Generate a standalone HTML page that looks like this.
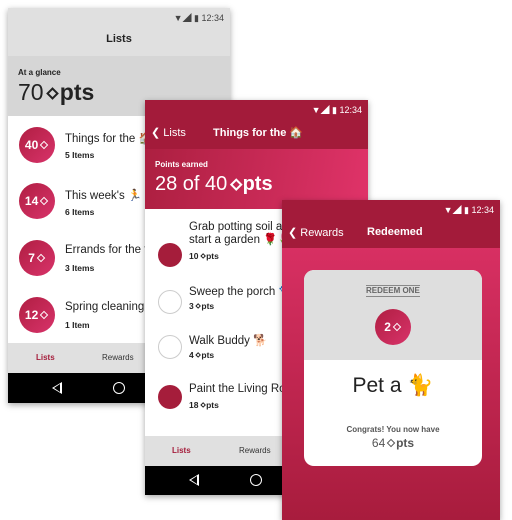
<!DOCTYPE html>
<html><head><meta charset="utf-8"><style>
*{margin:0;padding:0;box-sizing:border-box}
body{width:512px;height:512px;background:#fff;position:relative;overflow:hidden;font-family:"Liberation Sans","Noto Sans CJK JP",sans-serif;color:#222}
.ph{position:absolute;overflow:hidden;box-shadow:0 2px 6px rgba(0,0,0,.35)}
.abs{position:absolute}
.sb{position:absolute;right:6px;top:3px;font-size:9px;display:flex;align-items:center;gap:3px}
.circ{position:absolute;border-radius:50%;background:linear-gradient(135deg,#b01e42,#d8336a);color:#fff;font-weight:bold;font-size:12px;display:flex;align-items:center;justify-content:center}
.dia{display:inline-block;width:.5em;height:.5em;border:.14em solid currentColor;transform:rotate(45deg);margin:0 .15em 0 .25em;vertical-align:.1em}
.t{position:absolute;font-size:11.5px;white-space:nowrap}
.s{position:absolute;font-size:8.5px;font-weight:bold;white-space:nowrap}
.nav{position:absolute;background:#000}
.tri{position:absolute;width:0;height:0;border-top:6px solid transparent;border-bottom:6px solid transparent;border-right:10px solid #fff}
.tri::after{content:"";position:absolute;left:2px;top:-4px;border-top:4px solid transparent;border-bottom:4px solid transparent;border-right:6px solid #000}
.cir{position:absolute;width:12px;height:12px;border:1.5px solid #fff;border-radius:50%}
.oc{position:absolute;width:24px;height:24px;border-radius:50%;border:1px solid #ccc;background:#fff}
.fc{position:absolute;width:24px;height:24px;border-radius:50%;background:#a51d3b}
</style></head><body>

<!-- Phone 1 -->
<div class="ph" style="left:8px;top:8px;width:222px;height:395px;background:#fff">
 <div class="abs" style="left:0;top:0;width:222px;height:48px;background:#e0e0e0"></div>
 <div class="sb" style="color:#444">▼◢ ▮ 12:34</div>
 <div class="abs" style="left:0;top:25px;width:222px;text-align:center;font-weight:bold;font-size:11px">Lists</div>
 <div class="abs" style="left:0;top:48px;width:222px;height:60px;background:#d6d6d6"></div>
 <div class="abs" style="left:10px;top:60px;font-size:8px;font-weight:bold">At a glance</div>
 <div class="abs" style="left:10px;top:71px;font-size:23px">70<span class="dia" style="font-size:18px"></span><b>pts</b></div>
 <div class="circ" style="left:11px;top:119px;width:36px;height:36px">40<span class="dia"></span></div>
 <div class="t" style="left:57px;top:123px">Things for the 🏠</div><div class="s" style="left:57px;top:142px">5 Items</div>
 <div class="circ" style="left:11px;top:175px;width:36px;height:36px">14<span class="dia"></span></div>
 <div class="t" style="left:57px;top:180px">This week's 🏃</div><div class="s" style="left:57px;top:199px">6 Items</div>
 <div class="circ" style="left:11px;top:232px;width:36px;height:36px">7<span class="dia"></span></div>
 <div class="t" style="left:57px;top:236px">Errands for the f</div><div class="s" style="left:57px;top:255px">3 Items</div>
 <div class="circ" style="left:11px;top:289px;width:36px;height:36px">12<span class="dia"></span></div>
 <div class="t" style="left:57px;top:293px">Spring cleaning</div><div class="s" style="left:57px;top:312px">1 Item</div>
 <div class="abs" style="left:0;top:335px;width:222px;height:30px;background:#e0e0e0"></div>
 <div class="abs" style="left:28px;top:345px;font-size:8px;color:#a51d3b;font-weight:bold">Lists</div>
 <div class="abs" style="left:94px;top:345px;font-size:8px;color:#333">Rewards</div>
 <div class="nav" style="left:0;top:365px;width:222px;height:30px"></div>
 <div class="tri" style="left:44px;top:374px"></div>
 <div class="cir" style="left:105px;top:374px"></div>
</div>

<!-- Phone 2 -->
<div class="ph" style="left:145px;top:100px;width:223px;height:395px;background:#fff">
 <div class="abs" style="left:0;top:0;width:223px;height:49px;background:#a31b3a"></div>
 <div class="sb" style="color:#fff">▼◢ ▮ 12:34</div>
 <div class="abs" style="left:6px;top:26px;color:#fff;font-size:11px">❮ Lists</div>
 <div class="abs" style="left:68px;top:26px;color:#fff;font-size:11px;font-weight:bold">Things for the 🏠</div>
 <div class="abs" style="left:0;top:49px;width:223px;height:60px;background:linear-gradient(100deg,#ac1f40,#e03369)"></div>
 <div class="abs" style="left:10px;top:60px;font-size:8px;font-weight:bold;color:#fff">Points earned</div>
 <div class="abs" style="left:10px;top:73px;font-size:20px;color:#fff">28 of 40<span class="dia" style="font-size:17px"></span><b>pts</b></div>
 <div class="fc" style="left:13px;top:143px"></div>
 <div class="t" style="left:44px;top:121px;line-height:13px">Grab potting soil an<br>start a garden 🌹🌷</div><div class="s" style="left:44px;top:151px">10<span class="dia"></span>pts</div>
 <div class="oc" style="left:13px;top:190px"></div>
 <div class="t" style="left:44px;top:184px">Sweep the porch 🐾</div><div class="s" style="left:44px;top:201px">3<span class="dia"></span>pts</div>
 <div class="oc" style="left:13px;top:235px"></div>
 <div class="t" style="left:44px;top:233px">Walk Buddy 🐕</div><div class="s" style="left:44px;top:250px">4<span class="dia"></span>pts</div>
 <div class="fc" style="left:13px;top:285px"></div>
 <div class="t" style="left:44px;top:283px">Paint the Living Ro</div><div class="s" style="left:44px;top:300px">18<span class="dia"></span>pts</div>
 <div class="abs" style="left:0;top:336px;width:223px;height:30px;background:#e0e0e0"></div>
 <div class="abs" style="left:27px;top:346px;font-size:8px;color:#a51d3b;font-weight:bold">Lists</div>
 <div class="abs" style="left:94px;top:346px;font-size:8px;color:#333">Rewards</div>
 <div class="nav" style="left:0;top:366px;width:223px;height:29px"></div>
 <div class="tri" style="left:44px;top:374px"></div>
 <div class="cir" style="left:105px;top:374px"></div>
</div>

<!-- Phone 3 -->
<div class="ph" style="left:282px;top:200px;width:218px;height:320px;background:linear-gradient(180deg,#e03369,#a81c3d)">
 <div class="abs" style="left:0;top:0;width:218px;height:48px;background:#a31b3a"></div>
 <div class="sb" style="color:#fff">▼◢ ▮ 12:34</div>
 <div class="abs" style="left:6px;top:26px;color:#fff;font-size:11px">❮ Rewards</div>
 <div class="abs" style="left:85px;top:26px;color:#fff;font-size:11px;font-weight:bold">Redeemed</div>
 <div class="abs" style="left:22px;top:70px;width:178px;height:196px;border-radius:10px;overflow:hidden;background:#fff">
  <div class="abs" style="left:0;top:0;width:178px;height:90px;background:#dedede"></div>
  <div class="abs" style="left:62px;top:15px;font-size:8px;font-weight:bold;color:#666;border-top:1px solid #888;border-bottom:1px solid #888;line-height:10px">REDEEM ONE</div>
  <div class="circ" style="left:71px;top:39px;width:36px;height:36px">2<span class="dia"></span></div>
  <div class="abs" style="left:0;top:104px;width:178px;text-align:center;font-size:21px">Pet a 🐈</div>
  <div class="abs" style="left:0;top:155px;width:178px;text-align:center;font-size:8px;font-weight:bold;color:#555">Congrats! You now have</div>
  <div class="abs" style="left:0;top:166px;width:178px;text-align:center;font-size:12px;color:#555">64<span class="dia"></span><b>pts</b></div>
 </div>
</div>
</body></html>
